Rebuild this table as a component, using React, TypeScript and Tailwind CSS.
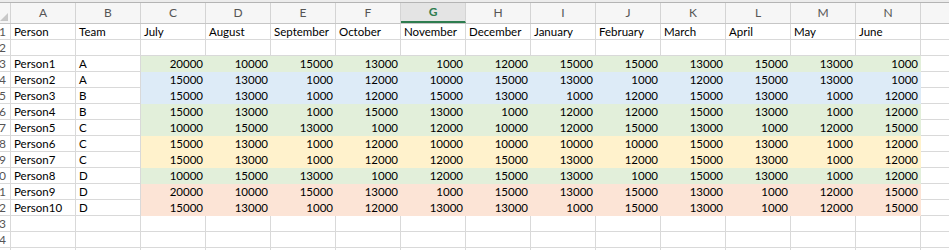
const cols = ["A", "B", "C", "D", "E", "F", "G", "H", "I", "J", "K", "L", "M", "N", ""];

const months = [
  "July", "August", "September", "October", "November", "December",
  "January", "February", "March", "April", "May", "June",
];

type Row = { name: string; team: string; fill: string; values: number[] };

const data: Row[] = [
  { name: "Person1", team: "A", fill: "bg-[#e2efda]", values: [20000, 10000, 15000, 13000, 1000, 12000, 15000, 15000, 13000, 15000, 13000, 1000] },
  { name: "Person2", team: "A", fill: "bg-[#ddebf7]", values: [15000, 13000, 1000, 12000, 10000, 15000, 13000, 1000, 12000, 15000, 13000, 1000] },
  { name: "Person3", team: "B", fill: "bg-[#ddebf7]", values: [15000, 13000, 1000, 12000, 15000, 13000, 1000, 12000, 15000, 13000, 1000, 12000] },
  { name: "Person4", team: "B", fill: "bg-[#e2efda]", values: [15000, 13000, 1000, 15000, 13000, 1000, 12000, 12000, 15000, 13000, 1000, 12000] },
  { name: "Person5", team: "C", fill: "bg-[#e2efda]", values: [10000, 15000, 13000, 1000, 12000, 10000, 12000, 15000, 13000, 1000, 12000, 15000] },
  { name: "Person6", team: "C", fill: "bg-[#fff2cc]", values: [15000, 13000, 1000, 12000, 10000, 10000, 10000, 10000, 15000, 13000, 1000, 12000] },
  { name: "Person7", team: "C", fill: "bg-[#fff2cc]", values: [15000, 13000, 1000, 12000, 12000, 15000, 13000, 12000, 15000, 13000, 1000, 12000] },
  { name: "Person8", team: "D", fill: "bg-[#e2efda]", values: [10000, 15000, 13000, 1000, 12000, 15000, 13000, 1000, 15000, 13000, 1000, 12000] },
  { name: "Person9", team: "D", fill: "bg-[#fce4d6]", values: [20000, 10000, 15000, 13000, 1000, 15000, 13000, 15000, 13000, 1000, 12000, 15000] },
  { name: "Person10", team: "D", fill: "bg-[#fce4d6]", values: [15000, 13000, 1000, 12000, 13000, 13000, 1000, 15000, 13000, 1000, 12000, 15000] },
];

const grid = "grid grid-cols-[11px_repeat(14,65px)_65px]";
const cell = "h-4 border-r border-b border-[#d9d9d9] px-[3px] leading-4 overflow-hidden whitespace-nowrap";

function RowHead({ n }: { n: number }) {
  return (
    <div className="h-4 overflow-hidden border-r border-b border-[#d9d9d9] flex justify-end pr-[4px] text-[12px] leading-4 text-[#555]">
      {n}
    </div>
  );
}

function EmptyRow({ n }: { n: number }) {
  return (
    <div className={grid}>
      <RowHead n={n} />
      {cols.map((c, i) => (
        <div key={i} className={cell} />
      ))}
    </div>
  );
}

export default function App() {
  return (
    <div className="w-[949px] h-[250px] overflow-hidden bg-white font-['Lato',sans-serif] text-[11.5px] text-black">
      <div className="h-[2px] bg-[#ececec]" />
      <div className="h-px bg-[#b4b4b4]" />
      {/* column letters */}
      <div className={`${grid} h-[21px] bg-[#f6f6f6] border-b border-[#c6c6c6]`}>
        <div className="relative border-r border-[#d4d4d4]">
          <div className="absolute left-0 bottom-[2px] w-0 h-0 border-l-[8px] border-l-transparent border-b-[8px] border-b-[#c8c8c8]" />
        </div>
        {cols.map((c, i) =>
          c === "G" ? (
            <div key={i} className="flex items-center justify-center border-r border-[#d4d4d4] bg-[#e4e4e4] border-b-2 border-b-[#2e7d4f] text-[12px] font-bold text-[#2e7d4f]">
              {c}
            </div>
          ) : (
            <div key={i} className="flex items-center justify-center border-r border-[#d4d4d4] text-[12px] text-[#555]">
              {c}
            </div>
          )
        )}
      </div>
      {/* row 1 headers */}
      <div className={grid}>
        <RowHead n={1} />
        <div className={cell}>Person</div>
        <div className={cell}>Team</div>
        {months.map((m) => (
          <div key={m} className={cell}>{m}</div>
        ))}
        <div className={cell} />
      </div>
      <EmptyRow n={2} />
      {data.map((r, i) => (
        <div key={r.name} className={grid}>
          <RowHead n={i + 3} />
          <div className={cell}>{r.name}</div>
          <div className={cell}>{r.team}</div>
          {r.values.map((v, j) => (
            <div key={j} className={`h-4 px-[3px] text-right leading-4 ${r.fill}`}>{v}</div>
          ))}
          <div className={cell} />
        </div>
      ))}
      <EmptyRow n={13} />
      <EmptyRow n={14} />
      <EmptyRow n={15} />
    </div>
  );
}
